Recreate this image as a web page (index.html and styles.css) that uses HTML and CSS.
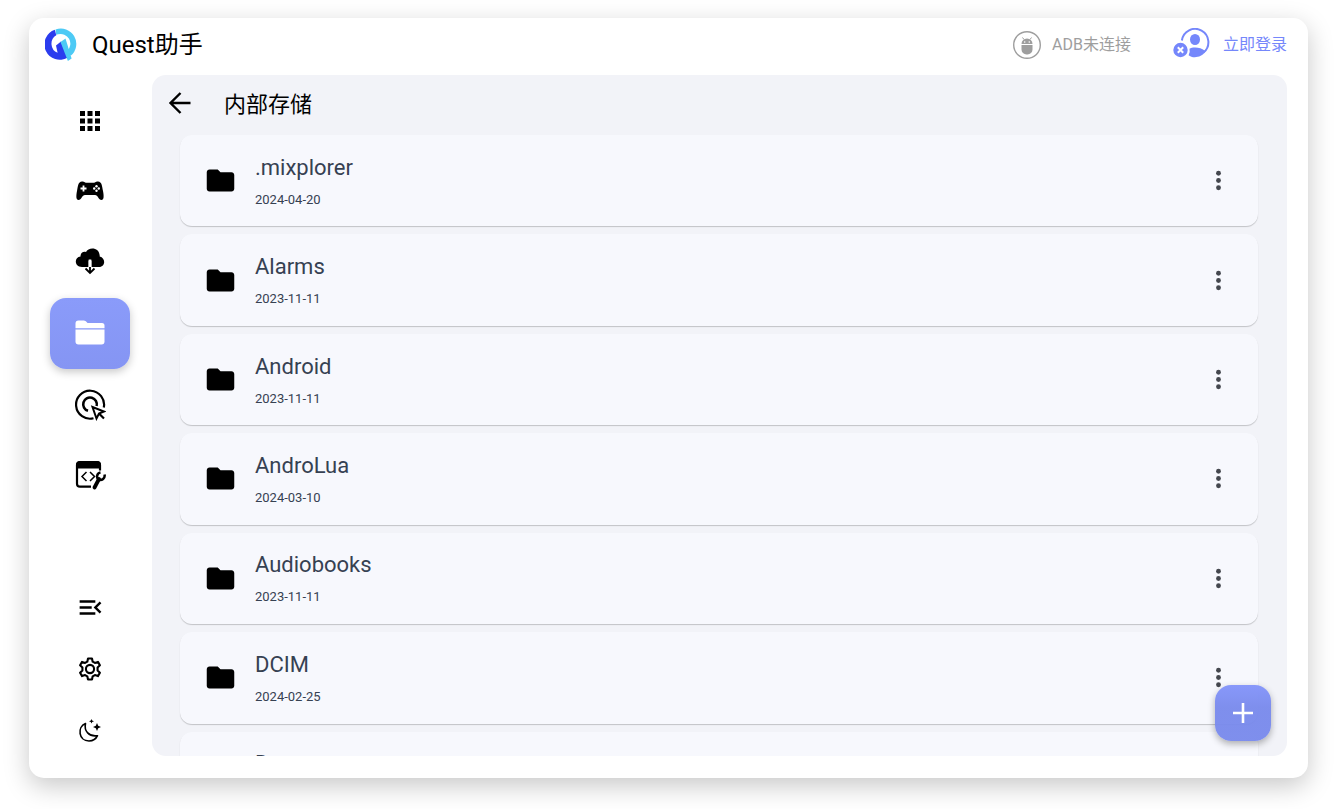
FILE: index.html
```html
<!DOCTYPE html>
<html lang="zh-CN">
<head>
  <meta charset="UTF-8" />
  <meta name="viewport" content="width=device-width, initial-scale=1.0"/>
  <title>Quest助手</title>
  <link rel="stylesheet" href="styles.css">
</head>
<body>
  <svg class="sprite" aria-hidden="true">
    <symbol id="folder" viewBox="0 0 24 24"><path d="M10 4H4c-1.1 0-2 .9-2 2v12c0 1.1.9 2 2 2h16c1.1 0 2-.9 2-2V8c0-1.1-.9-2-2-2h-8z"/></symbol>
    <symbol id="more" viewBox="0 0 24 24"><circle cx="12" cy="6" r="2"/><circle cx="12" cy="12" r="2"/><circle cx="12" cy="18" r="2"/></symbol>
  </svg>

  <div class="window">
    <header class="header">
      <svg class="logo" viewBox="0 0 32 34">
        <path fill="#4dcaf5" d="M10.5 1.5A15.4 15.4 0 0 1 25.7 27.8L22.4 22.6A9.7 9.7 0 0 0 13 6.3L11.2 6.7Z"/>
        <path fill="#2b3cee" d="M9.8 1.8L11.3 7.3A9.7 9.7 0 0 0 12.6 24.7L11 17.5L16 13.6L22.5 29.7A15.4 15.4 0 1 1 9.8 1.8Z"/>
        <path fill="#4dcaf5" d="M15.5 14L20.5 10.5L26.6 30.5L22.9 33Z"/>
      </svg>
      <h1>Quest助手</h1>
      <div class="adb">
        <svg width="28" height="28" viewBox="0 0 28 28">
          <circle cx="14" cy="14" r="13.3" fill="none" stroke="#9e9e9e" stroke-width="1.4"/>
          <path fill="#9e9e9e" d="M8.5 13a5.5 5.5 0 0 1 11 0zM8.5 14h11v4.500a5 5 0 0 1-5 5h-1a5 5 0 0 1-5-5z"/>
          <path stroke="#9e9e9e" d="M11 8.5L9.5 6.5M17 8.5L18.5 6.5"/>
          <circle cx="11.7" cy="11" r=".8" fill="#fff"/><circle cx="16.3" cy="11" r=".8" fill="#fff"/>
        </svg>
        <span>ADB未连接</span>
      </div>
      <a href="#" class="login">
        <svg width="37" height="34" viewBox="0 0 37 34">
          <path d="M8.9 12.5A13.3 13.3 0 1 1 30.5 24.5" fill="none" stroke="#7587fb" stroke-width="2"/>
          <ellipse cx="22" cy="11.5" rx="5" ry="5.5" fill="#7587fb"/>
          <path fill="#7587fb" d="M16.5 20.8C19 19.3 27 18.4 32.5 23.3C28.5 30 19.5 30.6 15.6 27.2Q17.3 24 16.5 20.8Z"/>
          <circle cx="7.5" cy="22" r="7.2" fill="#7587fb"/>
          <path d="M4.8 19.3l5.4 5.4m0-5.4l-5.4 5.4" stroke="#fff" stroke-width="2"/>
        </svg>
        <span>立即登录</span>
      </a>
    </header>

    <div class="body">
      <nav class="sidebar">
        <button aria-label="应用"><svg width="30" height="30" viewBox="0 0 24 24"><path d="M4 8h4V4H4zm6 12h4v-4h-4zm-6 0h4v-4H4zm0-6h4v-4H4zm6 0h4v-4h-4zm6-10v4h4V4zm-6 4h4V4h-4zm6 6h4v-4h-4zm0 6h4v-4h-4z"/></svg></button>
        <button aria-label="游戏">
          <svg width="30" height="32" viewBox="0 0 30 32">
            <path d="M7 5.5C9 5 10 6.8 12 6.8h6C20 6.8 21 5 23 5.5C27 5.8 27 10 28 15C29 20 29 24 26.5 24C23.5 24 23 19 20 19H10C7 19 6.5 24 3.5 24C1 24 1 20 2 15C3 10 3 5.8 7 5.5Z"/>
            <path stroke="#fff" stroke-width="1.8" d="M5.5 12.5h6M8.5 9.5v6"/>
            <g fill="#fff"><circle cx="21.5" cy="10.2" r="1.2"/><circle cx="21.5" cy="14.8" r="1.2"/><circle cx="19.2" cy="12.5" r="1.2"/><circle cx="23.8" cy="12.5" r="1.2"/></g>
          </svg>
        </button>
        <button aria-label="下载">
          <svg width="30" height="32" viewBox="0 0 30 32">
            <path d="M7 20C-1 20-1 10 5.5 9.500C5.5 5 9 4 11 5C13.5-.5 25-.2 24.7 9.500C31 11 30.5 20 24 20H16.500v-6.500h-3V20Z"/>
            <path d="M15 14v11.500M10.500 21.500L15 26L19.500 21.500" fill="none" stroke="#000" stroke-width="1.800"/>
            <path d="M15 12.500v7.500" stroke="#fff" stroke-width="2.600"/>
          </svg>
        </button>
        <button class="active" aria-label="文件">
          <svg width="30" height="32" viewBox="0 0 30 32" fill="#fff">
            <path d="M.5 10.2V5.5Q.5 2.5 3.5 2.5H9Q11 2.5 12.5 5H27Q29.5 5 29.5 7.5V10.2Z"/>
            <path d="M.5 11.5h29V23.5Q29.5 26.5 26.5 26.5H3.5Q.5 26.5 .5 23.5Z"/>
          </svg>
        </button>
        <button aria-label="操作">
          <svg width="32" height="32" viewBox="0 0 32 32" fill="none" stroke="#000" stroke-width="2.2">
            <path d="M19.5 29.3A14 14 0 1 1 29.8 18.5"/>
            <path d="M14 21.8A6.8 6.8 0 1 1 22.6 17" stroke-width="2.6"/>
            <path d="M18.5 18L30 22.5L25 24.5L22.5 29.5Z" stroke-width="2"/>
            <path d="M25 24.5L30 29.5"/>
          </svg>
        </button>
        <button aria-label="工具">
          <svg width="32" height="34" viewBox="0 0 32 34" fill="none" stroke="#000">
            <path d="M17 27.7H6Q3 27.7 3 24.7V6Q3 3 6 3H23Q26 3 26 6V11.5" stroke-width="2.2"/>
            <path d="M2.5 9V6Q2.5 2.5 6 2.5H23.5Q26.5 2.5 26.5 6V9Z" fill="#000"/>
            <path d="M12.5 13L8 17.5L12.5 22M16 13L20.5 17.5L16 22" stroke-width="1.5"/>
            <path d="M20.5 28.5L25 20" stroke-width="3.8" stroke-linecap="round"/>
            <path d="M26.5 13.5A4 4 0 0 0 24.5 20.5A4.3 4.3 0 0 0 30.5 15.5" stroke-width="2.5"/>
          </svg>
        </button>
        <div class="sidebar-bottom">
          <button aria-label="收起菜单"><svg width="29" height="29" viewBox="0 0 24 24"><path d="M3 18h13v-2H3zm0-5h10v-2H3zm0-7v2h13V6zm18 9.600L17.400 12 21 8.400 19.600 7l-5 5 5 5z"/></svg></button>
          <button aria-label="设置">
            <svg width="28" height="28" viewBox="0 0 24 24" fill="none" stroke="#000" stroke-width="1.8" stroke-linejoin="round">
              <path d="M10.3 3h3.4l.6 2.7 1.9 1.1 2.6-.9 1.7 2.9-2 1.9v2.6l2 1.9-1.7 2.9-2.6-.9-1.9 1.1-.6 2.7h-3.4l-.6-2.7-1.9-1.1-2.6.9-1.7-2.9 2-1.9v-2.6l-2-1.9 1.7-2.9 2.6.9 1.9-1.1z"/>
              <circle cx="12" cy="12" r="3.5"/>
            </svg>
          </button>
          <button aria-label="深色模式">
            <svg width="28" height="28" viewBox="0 0 28 28">
              <path d="M9.5 6.5C1 10 2.5 24 13 24C17 24 20 22 21.5 18.7C13 20 7.8 14 9.5 6.5Z" fill="none" stroke="#000" stroke-width="1.6" stroke-linejoin="round"/>
              <path d="M21 6l1.2 2.8L25 10l-2.8 1.2L21 14l-1.2-2.8L17 10l2.8-1.2zM15.5 2l.7 1.5 1.8.7-1.8.7-.7 1.6-.7-1.6-1.8-.7 1.8-.7z"/>
            </svg>
          </button>
        </div>
      </nav>

      <main class="panel">
        <div class="panel-head">
          <button aria-label="返回"><svg width="24" height="28" viewBox="0 0 24 28" fill="none" stroke="#000" stroke-width="2.4"><path d="M22.500 12H3M12.500 2L2.500 12L12.500 22"/></svg></button>
          <h2>内部存储</h2>
        </div>
        <div class="scroll">
          <ul class="files">
            <li class="file">
              <svg class="folder"><use href="#folder"/></svg>
              <div class="info"><h3>.mixplorer</h3><p>2024-04-20</p></div>
              <button aria-label="更多"><svg><use href="#more"/></svg></button>
            </li>
            <li class="file">
              <svg class="folder"><use href="#folder"/></svg>
              <div class="info"><h3>Alarms</h3><p>2023-11-11</p></div>
              <button aria-label="更多"><svg><use href="#more"/></svg></button>
            </li>
            <li class="file">
              <svg class="folder"><use href="#folder"/></svg>
              <div class="info"><h3>Android</h3><p>2023-11-11</p></div>
              <button aria-label="更多"><svg><use href="#more"/></svg></button>
            </li>
            <li class="file">
              <svg class="folder"><use href="#folder"/></svg>
              <div class="info"><h3>AndroLua</h3><p>2024-03-10</p></div>
              <button aria-label="更多"><svg><use href="#more"/></svg></button>
            </li>
            <li class="file">
              <svg class="folder"><use href="#folder"/></svg>
              <div class="info"><h3>Audiobooks</h3><p>2023-11-11</p></div>
              <button aria-label="更多"><svg><use href="#more"/></svg></button>
            </li>
            <li class="file">
              <svg class="folder"><use href="#folder"/></svg>
              <div class="info"><h3>DCIM</h3><p>2024-02-25</p></div>
              <button aria-label="更多"><svg><use href="#more"/></svg></button>
            </li>
            <li class="file">
              <svg class="folder"><use href="#folder"/></svg>
              <div class="info"><h3>Documents</h3></div>
              <button aria-label="更多"><svg><use href="#more"/></svg></button>
            </li>
          </ul>
        </div>
        <button class="fab" aria-label="新建"><svg width="20" height="20" viewBox="0 0 20 20"><path d="M10 0v20M0 10h20" stroke="#fff" stroke-width="2.6"/></svg></button>
      </main>
    </div>
  </div>
</body>
</html>
```
FILE: styles.css
```css
:root {
  --accent: #7587fb;
  --text: #364152;
  --panel: #f2f3f8;
  --card: #f7f8fd;
}
* { box-sizing: border-box; }
body {
  margin: 0;
  height: 100vh;
  padding: 18px 29px 31px;
  background: #fff;
  color: #000;
  font-family: Roboto, "Noto Sans CJK SC", sans-serif;
}
h1, h2, h3, p, ul { margin: 0; padding: 0; font-weight: 400; }
svg { display: block; flex-shrink: 0; }
.sprite { position: absolute; width: 0; height: 0; }
button {
  display: flex;
  align-items: center;
  justify-content: center;
  padding: 0;
  border: none;
  background: none;
  cursor: pointer;
}
.window {
  height: 100%;
  display: flex;
  flex-direction: column;
  border-radius: 15px;
  background: #fff;
  box-shadow: 0 8px 26px rgba(0, 0, 0, 0.22);
}
.header {
  height: 57px;
  flex-shrink: 0;
  display: flex;
  align-items: center;
  padding: 0 21px 4px 16px;
}
.logo { width: 32px; height: 34px; margin-right: 15px; }
h1 { font-size: 24px; line-height: 32px; }
.adb {
  display: flex;
  align-items: center;
  gap: 11px;
  margin-left: auto;
  margin-right: 42px;
  color: #9e9e9e;
  font-size: 16px;
  line-height: 24px;
}
.login {
  display: flex;
  align-items: center;
  gap: 13px;
  color: var(--accent);
  font-size: 16px;
  line-height: 24px;
  text-decoration: none;
}
.body {
  flex: 1;
  min-height: 0;
  display: flex;
}
.sidebar {
  width: 123px;
  flex-shrink: 0;
  display: flex;
  flex-direction: column;
  padding: 10px 22px 16px 21px;
}
.sidebar button {
  width: 80px;
  height: 71px;
  flex-shrink: 0;
  border-radius: 16px;
}
.sidebar .active {
  background: linear-gradient(#8a9bfa, #8595f3);
  box-shadow: 0 3px 8px rgba(0, 0, 0, 0.22);
}
.sidebar-bottom { margin-top: auto; }
.sidebar .sidebar-bottom button { height: 62px; }
.panel {
  position: relative;
  flex: 1;
  display: flex;
  flex-direction: column;
  margin: 0 21px 22px 0;
  border-radius: 14px;
  background: var(--panel);
  overflow: hidden;
}
.panel-head {
  height: 60px;
  flex-shrink: 0;
  display: flex;
  align-items: center;
  gap: 32px;
  padding-left: 16px;
}
h2 { font-size: 22px; line-height: 32px; }
.scroll {
  flex: 1;
  min-height: 0;
  overflow-y: auto;
  scrollbar-width: none;
}
.files {
  min-height: 688px;
  padding: 0 29px 0 28px;
  list-style: none;
  display: grid;
  grid-auto-rows: 1fr;
  gap: 8px;
}
.file {
  display: flex;
  align-items: center;
  padding: 0 25px 0 24px;
  border-radius: 12px;
  background: var(--card);
  box-shadow: 0 1px 1px rgba(0, 0, 0, 0.2);
}
.folder { width: 33px; height: 33px; }
.info { flex: 1; min-height: 58px; margin-left: 18px; color: var(--text); }
h3 { font-size: 22px; line-height: 32px; }
.info p { font-size: 13px; line-height: 20px; margin-top: 6px; }
.file button svg { width: 29px; height: 29px; fill: #44474e; }
.fab {
  position: absolute;
  right: 16px;
  bottom: 15px;
  width: 56px;
  height: 56px;
  border-radius: 16px;
  background: linear-gradient(rgba(130, 147, 250, 0.95), rgba(120, 137, 236, 0.95) 40%);
  box-shadow: 0 3px 7px rgba(0, 0, 0, 0.3);
}
```
